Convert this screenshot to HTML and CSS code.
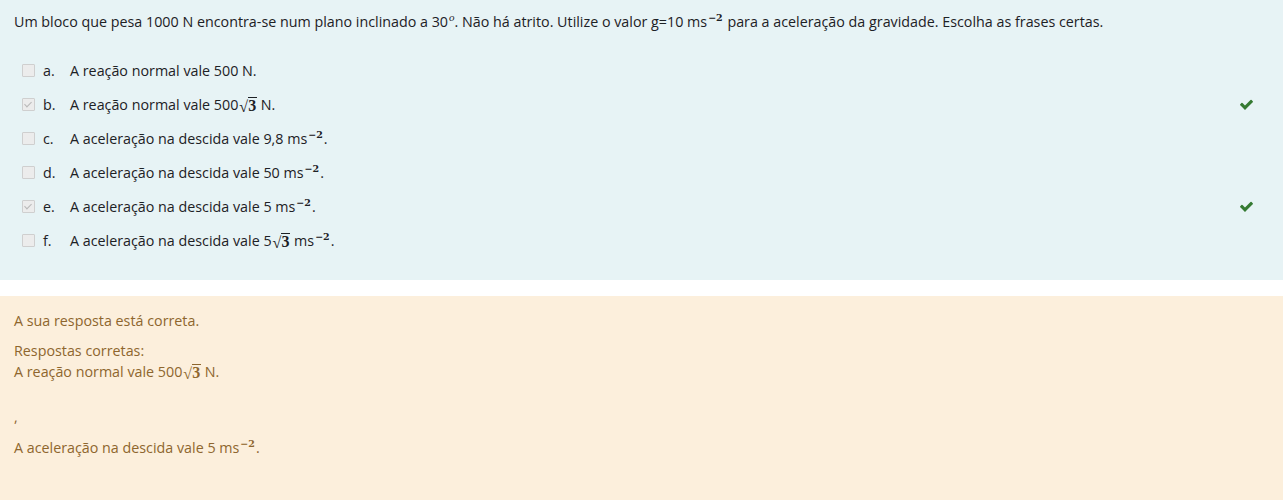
FILE: index.html
```html
<!DOCTYPE html>
<html lang="pt">
<head>
<meta charset="utf-8">
<link rel="stylesheet" href="styles.css">
</head>
<body>
<div class="page">
  <div class="formulation">
    <div class="qtext">Um bloco que pesa 1000 N encontra-se num plano inclinado a 30<sup class="mi">o</sup>. Não há atrito. Utilize o valor g=10 ms<sup class="mn">−2</sup> para a aceleração da gravidade. Escolha as frases certas.</div>
    <div class="answers">
      <div class="row"><span class="cb"></span><span class="letter">a.</span><span class="txt">A reação normal vale 500 N.</span></div>
      <div class="row"><span class="cb checked"></span><span class="letter">b.</span><span class="txt">A reação normal vale 500<span class="sqrt"><span class="rad">√</span><span class="rnd">3</span></span> N.</span>
        <svg class="ok" viewBox="0 0 1792 1792"><path d="M1671 566q0 40-28 68l-724 724-136 136q-28 28-68 28t-68-28l-136-136-362-362q-28-28-28-68t28-68l136-136q28-28 68-28t68 28l294 295 656-657q28-28 68-28t68 28l136 136q28 28 28 68z"/></svg></div>
      <div class="row"><span class="cb"></span><span class="letter">c.</span><span class="txt">A aceleração na descida vale 9,8 ms<sup class="mn">−2</sup>.</span></div>
      <div class="row"><span class="cb"></span><span class="letter">d.</span><span class="txt">A aceleração na descida vale 50 ms<sup class="mn">−2</sup>.</span></div>
      <div class="row"><span class="cb checked"></span><span class="letter">e.</span><span class="txt">A aceleração na descida vale 5 ms<sup class="mn">−2</sup>.</span>
        <svg class="ok" viewBox="0 0 1792 1792"><path d="M1671 566q0 40-28 68l-724 724-136 136q-28 28-68 28t-68-28l-136-136-362-362q-28-28-28-68t28-68l136-136q28-28 68-28t68 28l294 295 656-657q28-28 68-28t68 28l136 136q28 28 28 68z"/></svg></div>
      <div class="row"><span class="cb"></span><span class="letter">f.</span><span class="txt">A aceleração na descida vale 5<span class="sqrt"><span class="rad">√</span><span class="rnd">3</span></span> ms<sup class="mn">−2</sup>.</span></div>
    </div>
  </div>
  <div class="outcome">
    <div class="feedback">A sua resposta está correta.</div>
    <div class="right">
      <div class="line">Respostas corretas:</div>
      <div class="line">A reação normal vale 500<span class="sqrt"><span class="rad">√</span><span class="rnd">3</span></span> N.</div>
      <div class="line comma">,</div>
      <div class="line">A aceleração na descida vale 5 ms<sup class="mn">−2</sup>.</div>
    </div>
  </div>
</div>
</body>
</html>
```
FILE: styles.css
```css
html, body {
  margin: 0;
  padding: 0;
  background: #ffffff;
}
.page {
  width: 1283px;
  font-family: "Open Sans", "Noto Sans", sans-serif;
  font-size: 14.3px;
  line-height: 21px;
  color: #1d2125;
}
.formulation {
  background: #e7f3f5;
  padding: 11px 14px 23px 14px;
  height: 246px;
}
.qtext {
  height: 21px;
}
.answers {
  margin-top: 21px;
  padding-left: 8px;
}
.row {
  display: flex;
  align-items: center;
  height: 34px;
}
.cb {
  width: 11px;
  height: 11px;
  border: 1px solid #cfcfcf;
  background: #ececec;
  border-radius: 1px;
  position: relative;
  flex: none;
}
.cb.checked::after {
  content: "";
  position: absolute;
  left: 3px;
  top: 1px;
  width: 3px;
  height: 6px;
  border-right: 1px solid #b8b8b8;
  border-bottom: 1px solid #b8b8b8;
  transform: rotate(45deg);
}
.letter {
  margin-left: 8px;
  width: 27px;
  flex: none;
}
.txt {
  flex: 1;
}
.ok {
  width: 15px;
  height: 15px;
  fill: #357a32;
  margin-right: 15px;
  flex: none;
}
sup {
  line-height: 0;
  position: relative;
  vertical-align: baseline;
}
.mi {
  font-family: "Liberation Serif", "DejaVu Serif", serif;
  font-style: italic;
  font-size: 11px;
  top: -6px;
  margin-left: 1px;
}
.mn {
  font-family: "DejaVu Serif", "Liberation Serif", serif;
  font-weight: bold;
  font-size: 9.5px;
  top: -6px;
  margin-left: 1px;
  margin-right: 1px;
}
.sqrt {
  display: inline-flex;
  align-items: flex-end;
  font-family: "Liberation Serif", "DejaVu Serif", serif;
  vertical-align: baseline;
  line-height: 16px;
  margin: 0 0 0 1px;
}
.rad {
  font-size: 16px;
  position: relative;
  top: 2px;
}
.rnd {
  font-weight: bold;
  font-size: 16px;
  border-top: 1px solid currentColor;
  padding: 0 1px 0 0;
  line-height: 15px;
}
.outcome {
  background: #fcefdc;
  color: #8e662e;
  margin-top: 16px;
  padding: 14px 14px 0 14px;
  height: 190px;
}
.feedback {
  margin-bottom: 9px;
}
.comma {
  margin-top: 24px;
  margin-bottom: 10px;
}
```
